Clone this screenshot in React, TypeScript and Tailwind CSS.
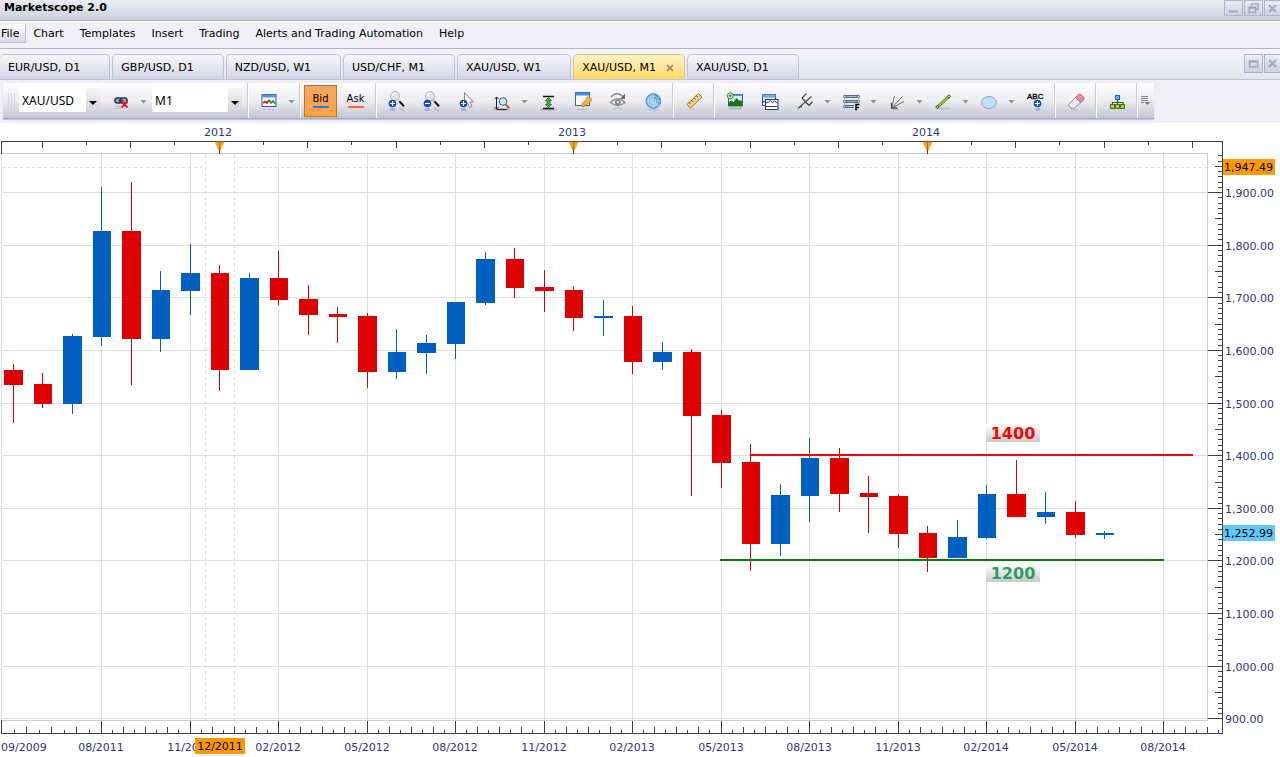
import clsx from 'clsx'
import { ReactNode } from 'react'

type TCandle = {
  high: number
  top: number
  bottom: number
  low: number
  up?: boolean
}

const menuItems = ['Chart', 'Templates', 'Insert', 'Trading', 'Alerts and Trading Automation', 'Help']

const tabs = [
  'EUR/USD, D1',
  'GBP/USD, D1',
  'NZD/USD, W1',
  'USD/CHF, M1',
  'XAU/USD, W1',
  'XAU/USD, M1',
  'XAU/USD, D1',
]
const activeTab = 5

// Monthly candles, 05/2011 - 06/2014, in chart units
const candles: TCandle[] = [
  { high: 364, top: 370, bottom: 385, low: 423 },
  { high: 373, top: 384, bottom: 404, low: 408 },
  { high: 334, top: 336, bottom: 404, low: 414, up: true },
  { high: 187, top: 231, bottom: 337, low: 346, up: true },
  { high: 182, top: 231, bottom: 339, low: 385 },
  { high: 271, top: 290, bottom: 339, low: 352, up: true },
  { high: 244, top: 273, bottom: 291, low: 315, up: true },
  { high: 265, top: 273, bottom: 370, low: 391 },
  { high: 273, top: 278, bottom: 370, low: 370, up: true },
  { high: 251, top: 278, bottom: 300, low: 305 },
  { high: 285, top: 299, bottom: 315, low: 335 },
  { high: 307, top: 314, bottom: 317, low: 343 },
  { high: 313, top: 316, bottom: 372, low: 388 },
  { high: 329, top: 352, bottom: 372, low: 379, up: true },
  { high: 335, top: 343, bottom: 353, low: 374, up: true },
  { high: 302, top: 302, bottom: 344, low: 359, up: true },
  { high: 252, top: 259, bottom: 303, low: 305, up: true },
  { high: 248, top: 259, bottom: 288, low: 298 },
  { high: 270, top: 287, bottom: 291, low: 312 },
  { high: 286, top: 290, bottom: 318, low: 331 },
  { high: 300, top: 316, bottom: 318, low: 336, up: true },
  { high: 306, top: 316, bottom: 362, low: 374 },
  { high: 342, top: 352, bottom: 362, low: 370, up: true },
  { high: 349, top: 352, bottom: 416, low: 496 },
  { high: 410, top: 415, bottom: 463, low: 488 },
  { high: 444, top: 462, bottom: 544, low: 571 },
  { high: 484, top: 495, bottom: 544, low: 556, up: true },
  { high: 438, top: 458, bottom: 496, low: 522, up: true },
  { high: 448, top: 458, bottom: 494, low: 512 },
  { high: 476, top: 493, bottom: 497, low: 533 },
  { high: 494, top: 496, bottom: 534, low: 548 },
  { high: 526, top: 533, bottom: 558, low: 572 },
  { high: 520, top: 537, bottom: 558, low: 558, up: true },
  { high: 485, top: 494, bottom: 538, low: 539, up: true },
  { high: 460, top: 494, bottom: 517, low: 517 },
  { high: 492, top: 512, bottom: 517, low: 524, up: true },
  { high: 501, top: 512, bottom: 535, low: 538 },
  { high: 531, top: 533, bottom: 535, low: 539, up: true },
]

const months = [
  '08/2011', '11/2011', '02/2012', '05/2012', '08/2012', '11/2012', '02/2013',
  '05/2013', '08/2013', '11/2013', '02/2014', '05/2014', '08/2014',
]
const prices = [
  '1,900.00', '1,800.00', '1,700.00', '1,600.00', '1,500.00', '1,400.00',
  '1,300.00', '1,200.00', '1,100.00', '1,000.00', '900.00',
]

const monthX = (i: number) => Math.round(101 + 88.5 * i)
const candleX = (i: number) => Math.round(12.9 + 29.5 * i)
const priceY = (i: number) => Math.round(192.1 + 52.62 * i)
const range = (n: number) => Array.from({ length: n }, (_, i) => i)

function Chart() {
  return (
    <svg
      viewBox="0 123 1280 634"
      className="block w-full bg-white font-['DejaVu_Sans',sans-serif] text-[11px]"
      role="img"
      aria-label="XAU/USD monthly chart"
    >
      <defs>
        <linearGradient id="plate" x1="0" y1="0" x2="0" y2="1">
          <stop offset="0" stopColor="#ffffff" />
          <stop offset="1" stopColor="#c9c9c9" />
        </linearGradient>
      </defs>

      {/* grid */}
      <g fill="#dfdfdf" shapeRendering="crispEdges">
        <rect x="1" y="154" width="1" height="566" />
        {months.map((m, i) => (
          <rect key={m} x={monthX(i)} y="154" width="1" height="566" />
        ))}
        {prices.map((p, i) => (
          <rect key={p} x="2" y={priceY(i)} width="1205" height="1" />
        ))}
      </g>
      <g stroke="#dcdcdc" strokeDasharray="3 3" shapeRendering="crispEdges">
        <path d="M205.5 155V720M234.5 155V720M2 167.5H202M239 167.5H1207" />
      </g>
      <g fill="#c3cddd" shapeRendering="crispEdges">
        <rect x="1" y="153" width="1207" height="1" />
        <rect x="1" y="720" width="1207" height="1" />
        <rect x="1207" y="153" width="1" height="568" />
      </g>

      {/* axes */}
      <g fill="#404040" shapeRendering="crispEdges">
        <rect x="1" y="141" width="1222" height="1" />
        <rect x="1" y="141" width="1" height="13" />
        <rect x="1222" y="141" width="1" height="593" />
        <rect x="1" y="733" width="1222" height="1" />
        <rect x="1" y="720" width="1" height="13" />
        {range(27).map((k) => (
          <rect key={k} x={Math.floor(42.2 + 44.25 * k)} y="142" width="1" height={k % 2 ? 3 : 6} />
        ))}
        {range(7).map((k) => (
          <rect
            key={k}
            x={Math.round(13.5 + 12.5 * k)}
            y={k % 2 ? 727 : 730}
            width="1"
            height={k % 2 ? 6 : 3}
          />
        ))}
        {range(102).map((k) => {
          const size = k % 8 === 0 ? 12 : k % 2 === 0 ? 6 : 3
          return <rect key={k} x={Math.round(101 + 11.0625 * k)} y={733 - size} width="1" height={size} />
        })}
        {range(108).map((k) => {
          const step = k - 7
          const size = step % 10 === 0 ? 14 : step % 5 === 0 ? 7 : 4
          return (
            <rect key={k} x={1222 - size} y={Math.round(192.1 + 5.262 * step)} width={size} height="1" />
          )
        })}
      </g>

      {[219, 573, 927].map((x, i) => (
        <g key={x}>
          <path d={`M${x - 4} 142h9l-4 9h-1z`} fill="#ffa21c" stroke="#f09a18" strokeWidth=".5" />
          <path d={`M${x + 0.5} 142v8`} stroke="#b46c0c" />
          <path d={`M${x + 0.5} 150v4`} stroke="#404040" />
          <text x={x - 1} y="136" textAnchor="middle" fill="#2e3a78">
            {2012 + i}
          </text>
        </g>
      ))}

      <g fill="#33337c">
        <text x="1" y="751">09/2009</text>
        {months.map((m, i) => (
          <text key={m} x={monthX(i)} y="751" textAnchor="middle">
            {m}
          </text>
        ))}
        {prices.map((p, i) => (
          <text key={p} x="1225" y={priceY(i) + 5}>
            {p}
          </text>
        ))}
      </g>

      {candles.map((c, i) => {
        const x = candleX(i)
        return (
          <g key={i} fill={c.up ? '#0060c0' : '#dc0000'} shapeRendering="crispEdges">
            <rect x={x} y={c.high} width="1" height={c.low - c.high} />
            <rect x={i % 2 ? x - 8 : x - 9} y={c.top} width={i % 2 ? 18 : 19} height={c.bottom - c.top} />
          </g>
        )
      })}

      {/* support and resistance */}
      <path d="M751 455H1193" stroke="#ff0000" strokeWidth="2" />
      <path d="M720 560H1164" stroke="#008000" strokeWidth="2" />
      <g className="text-[16px] font-bold" textAnchor="middle">
        <rect x="986" y="424" width="54" height="18" fill="url(#plate)" />
        <text x="1013" y="439" fill="#ff0000">1400</text>
        <rect x="986" y="564" width="54" height="18" fill="url(#plate)" />
        <text x="1013" y="579" fill="#2e9c66">1200</text>
      </g>

      {/* cursor and last price */}
      <rect x="195" y="738" width="50" height="16" fill="#ff9900" />
      <text x="220" y="750" textAnchor="middle">12/2011</text>
      <rect x="1223" y="159" width="52" height="16" fill="#ff9900" />
      <text x="1224" y="171">1,947.49</text>
      <rect x="1223" y="525" width="52" height="16" fill="#5fc8fa" />
      <text x="1224" y="537">1,252.99</text>
    </svg>
  )
}

function Icon({ children }: Readonly<{ children: ReactNode }>) {
  return (
    <svg width="22" height="22" viewBox="0 0 22 22" fill="none" className="shrink-0">
      {children}
    </svg>
  )
}

function Badge({ x, y, minus }: Readonly<{ x: number; y: number; minus?: boolean }>) {
  return (
    <>
      <ellipse cx={x} cy={y + 6} rx="3" ry="1.5" fill="#7f97cf" opacity=".6" />
      <circle cx={x} cy={y} r="3.8" fill="#1749a8" />
      <path d={`M${x - 2.5} ${y}h5${minus ? '' : `M${x} ${y - 2.5}v5`}`} stroke="#fff" strokeWidth="1.2" />
    </>
  )
}

function Lens({ minus }: Readonly<{ minus?: boolean }>) {
  return (
    <Icon>
      <path d="M13 17l5 3" stroke="#a9a9b4" strokeWidth="2" opacity=".6" />
      <circle cx="9" cy="5.2" r="4.6" fill="#e0e0e5" stroke="#b2b2b8" />
      <path d="M6 4.5a3.4 3.4 0 0 1 5-1.8" stroke="#fff" strokeWidth="1.5" />
      <path d="M12 9l2 2" stroke="#999" strokeWidth="1.5" />
      <path d="M13.5 10.5l4.5 4.8" stroke="#111" strokeWidth="2" />
      <Badge x={6.5} y={12.5} minus={minus} />
    </Icon>
  )
}

const icons = {
  link: (
    <Icon>
      <g stroke="#263a55" strokeWidth="1.6">
        <rect x="5" y="7" width="7" height="5" rx="2.5" fill="#9fb3cc" />
        <rect x="10" y="7" width="7" height="5" rx="2.5" fill="#9fb3cc" />
        <path d="M8.5 9.5h5" />
      </g>
      <path d="M5 15.5h8M6 17.5h5" stroke="#b8bcc8" />
      <path d="M11.5 10.5l6 6M17.5 10.5l-6 6" stroke="#e8131b" strokeWidth="1.8" />
    </Icon>
  ),
  chart: (
    <Icon>
      <rect x="4" y="3.5" width="14" height="12" fill="#fff" stroke="#2c5a9e" />
      <rect x="4" y="3.5" width="14" height="3" fill="#5b92e0" />
      <path d="M5 12l2-1.5 2 1.5 2-3" stroke="#d81818" strokeWidth="1.6" />
      <path d="M11 9l2 3 2-2 2.5 3" stroke="#1f8a2c" strokeWidth="1.6" />
      <path d="M5 18.5h2M10 18.5h2M14 18.5h2" stroke="#cfa9b6" />
    </Icon>
  ),
  pointer: (
    <Icon>
      <path d="M8.5 1.5v13l3-2.5 2 4.5 2.5-1-2-4.5h3.5z" fill="#f2f2f5" stroke="#85858f" />
      <Badge x={7.5} y={12.5} />
    </Icon>
  ),
  zoomRange: (
    <Icon>
      <ellipse cx="11" cy="18.5" rx="9" ry="1.5" fill="#b9b9c4" />
      <path d="M5.5 6v12.5M3.5 8l2-2 2 2M3.5 16l2 2 2-2M6 18.5h10" stroke="#222" />
      <circle cx="12" cy="10.5" r="3.8" fill="#c4edfa" stroke="#3c5f74" />
      <path d="M14.8 13.5l3.5 3.8" stroke="#b5651d" strokeWidth="2" />
    </Icon>
  ),
  fitHeight: (
    <Icon>
      <ellipse cx="11" cy="18.5" rx="9" ry="1.5" fill="#b9b9c4" />
      <path d="M6 5.5h11M6 17.5h11" stroke="#111" strokeWidth="1.5" />
      <path
        d="M11.5 6.5l3 3h-1.500v4h1.500l-3 3-3-3h1.500v-4h-1.500z"
        fill="#4fae2e"
        stroke="#1e6410"
        strokeWidth=".8"
      />
    </Icon>
  ),
  windowKey: (
    <Icon>
      <rect x="3.5" y="1.5" width="14" height="13" fill="#f8faff" stroke="#315fa8" />
      <rect x="3.5" y="1.5" width="14" height="3" fill="#4c86e0" />
      <path
        d="M18.5 6.5c-2-1.5-5 0-4.5 3l-4 3v3l2 .5 1-2 2-.5 2-2c2 0 3.5-3 1.5-5z"
        fill="#f7b42e"
        stroke="#bb7610"
        strokeWidth=".8"
      />
      <path d="M5 18.5h6" stroke="#a8b4d0" />
      <path d="M11 18.5h5" stroke="#e4c48a" />
    </Icon>
  ),
  eye: (
    <Icon>
      <path d="M4 6q5-6 11.500-1" stroke="#85858d" strokeWidth="1.3" />
      <path d="M18 2.5v5.5h-5z" fill="#66666e" />
      <path d="M3.500 11.500q7-7 14.500 0q-7 6-14.500 0z" fill="#f0f0f2" stroke="#8c8c94" strokeWidth="1.3" />
      <circle cx="10.8" cy="11.3" r="3" fill="#85858d" />
      <circle cx="10.8" cy="11" r="1.2" fill="#ddd" />
      <path d="M6 18q5-3 9 0" stroke="#bcbcc4" />
    </Icon>
  ),
  radar: (
    <Icon>
      <ellipse cx="11.5" cy="19" rx="6" ry="1.5" fill="#b9cfe4" />
      <circle cx="11.3" cy="10" r="7.3" fill="#7fc0e8" stroke="#3f83bb" />
      <path d="M11.3 10l6.5 3.500a7.300 7.300 0 0 0-6.500-10.800z" fill="#4d9bd2" />
      <circle cx="11.3" cy="10" r="5" stroke="#cfeaf9" strokeWidth=".8" />
      <circle cx="11.3" cy="10" r="2.5" stroke="#cfeaf9" strokeWidth=".8" />
      <path d="M4.500 10h14M11.300 3v14M11.300 10l5 5" stroke="#cfeaf9" strokeWidth=".6" />
    </Icon>
  ),
  ruler: (
    <Icon>
      <path d="M6 19l5-1" stroke="#d8c6a6" strokeWidth="2" />
      <path d="M4 13.5L15.5 2.5l3.5 3.5L7.5 17z" fill="#f3d286" stroke="#a5772a" />
      <path d="M6 11.5l1.5 1.5M8.500 9.300l1.500 1.500M10.800 7l1.500 1.500M13.200 4.700l1.500 1.500" stroke="#6d4c17" />
    </Icon>
  ),
  picture: (
    <Icon>
      <rect x="4.5" y="3.5" width="14" height="11.5" fill="#d3e8fb" stroke="#2f66b4" />
      <path d="M4.5 4h14" stroke="#3c7ad0" strokeWidth="1.5" />
      <path d="M4.5 15v-3.500l3-2 2 1.500 3-4 3 3 1.500-1 1.500 2v4z" fill="#1c7410" />
      <path d="M5 17.5h13" stroke="#a7c4a4" strokeWidth="2" />
      <circle cx="6.2" cy="4.8" r="3" fill="#dff2c4" stroke="#4d8a1c" />
      <path d="M4.500 4.800h3.500M6.200 3v3.500" stroke="#4d8a1c" />
    </Icon>
  ),
  windows: (
    <Icon>
      <rect x="3.5" y="3.5" width="13" height="11" fill="#dbe8fb" stroke="#2f5796" />
      <rect x="3.5" y="3.5" width="13" height="3" fill="#6ea2ea" />
      <path d="M4 10.5h12" stroke="#243c66" />
      <rect x="6.5" y="8.5" width="12.5" height="10" fill="#fff" stroke="#243c66" />
      <path d="M6.5 12l3-1 2-1.5 2 2 2-1.5 3 2" stroke="#333" />
      <path d="M7 15.5h12" stroke="#243c66" />
    </Icon>
  ),
  pitchfork: (
    <Icon>
      <path
        d="M4 17.500L17.500 5.500M8 7l7 7.500M8 7l4.500-4.500M15 14.500l3.500-4M5 16h3"
        stroke="#45454c"
        strokeWidth="1.2"
      />
    </Icon>
  ),
  fib: (
    <Icon>
      {[5.5, 10.5, 15.5].map((y) => (
        <g key={y}>
          <rect x="4" y={y - 1.5} width="15" height="3" fill="#4f6a78" />
          <path d={`M6 ${y}h11`} stroke="#a9bbc5" />
          <circle cx="4.7" cy={y} r="1.3" fill="#dde6ea" stroke="#3d5360" strokeWidth=".8" />
          <circle cx="18.3" cy={y} r="1.3" fill="#dde6ea" stroke="#3d5360" strokeWidth=".8" />
        </g>
      ))}
      <rect x="14" y="12.5" width="6" height="8" fill="#dcdce6" />
      <path d="M16 19.5v-6h3.500M16 16.500h3" stroke="#000" strokeWidth="1.5" />
    </Icon>
  ),
  fan: (
    <Icon>
      <path d="M5.500 17L8.500 5M5.500 17L16.500 5.500M5.500 17L18 10.500" stroke="#6a6a70" />
      <path d="M5.500 12v5h6" stroke="#4a4a50" strokeWidth="1.3" />
      <path d="M6 18.500h7" stroke="#b9b9c4" />
    </Icon>
  ),
  line: (
    <Icon>
      <ellipse cx="12" cy="17.5" rx="7" ry="1" fill="#bdbdc8" />
      <path d="M5.5 16L17 5.5" stroke="#54800a" strokeWidth="3" />
      <path d="M5.5 16L17 5.5" stroke="#9fd02c" strokeWidth="1.4" />
      <circle cx="5.3" cy="16" r="1.3" fill="#eee" stroke="#42580f" />
      <circle cx="17" cy="5.5" r="1.3" fill="#eee" stroke="#42580f" />
    </Icon>
  ),
  ellipse: (
    <Icon>
      <ellipse cx="11" cy="11.5" rx="7.5" ry="6" fill="#c5def4" stroke="#7fa6cf" />
    </Icon>
  ),
  abc: (
    <Icon>
      <text
        x="3"
        y="8"
        fontSize="8"
        fontFamily="Liberation Sans, sans-serif"
        fill="#000"
        stroke="#000"
        strokeWidth=".3"
      >
        ABC
      </text>
      <Badge x={13.5} y={12.5} />
    </Icon>
  ),
  eraser: (
    <Icon>
      <path d="M6 19h7" stroke="#c9c4ce" strokeWidth="2" />
      <path d="M4 13l6.500-6.500 5.500 5-6.500 5.500q-2 1-3.500 0l-2-2q-1-1 0-2z" fill="#ececee" stroke="#8e8e96" />
      <path d="M10.500 6.500l3-2.800q1.500-1 3 .3l2 2q1 1.500 0 2.800L16 11.500z" fill="#ec8d9c" stroke="#c05c70" />
    </Icon>
  ),
  tree: (
    <Icon>
      <path d="M11.5 9v5M6.500 14v-2.500h10.500V14" stroke="#3c5a10" strokeWidth="1.2" />
      <rect x="9.5" y="4.5" width="4" height="4" fill="#58b4f4" stroke="#1d62b8" />
      {[4.5, 9.5, 14.5].map((x) => (
        <rect key={x} x={x} y="13.5" width="4" height="4" fill="#a5cc3a" stroke="#4f740c" />
      ))}
    </Icon>
  ),
}

function Tool({ name, children }: Readonly<{ name: string; children: ReactNode }>) {
  return (
    <button aria-label={name} className="flex h-full w-[35px] shrink-0 items-center justify-center pt-[3px]">
      {children}
    </button>
  )
}

function Caret() {
  return (
    <button aria-label="More" className="flex h-full w-[11px] shrink-0 items-center justify-center pt-0.5">
      <svg width="7" height="4" viewBox="0 0 7 4">
        <path d="M0.5 0h6L3.5 3.5z" fill="#9090a2" />
      </svg>
    </button>
  )
}

function Separator() {
  return (
    <div className="flex h-full w-1.5 shrink-0 justify-center">
      <div className="w-px bg-[#c9c9d6]" />
      <div className="w-px bg-white" />
    </div>
  )
}

function Combo({ label, value, className }: Readonly<{ label: string; value: string; className?: string }>) {
  return (
    <div className={clsx('relative mt-[3px] h-[26px] shrink-0 self-start', className)}>
      <select
        aria-label={label}
        className="h-full w-full appearance-none bg-white pt-1 pl-[3px] font-['Noto_Sans',sans-serif] text-[12px] text-black"
      >
        <option>{value}</option>
      </select>
      <span className="pointer-events-none absolute right-0 bottom-0 flex h-6 w-[14px] items-center justify-center bg-linear-to-b from-[#f4f4f8] to-[#d2d2de] pt-1.5">
        <svg width="8" height="4" viewBox="0 0 8 4">
          <path d="M0 0h8L4 4z" fill="#000" />
        </svg>
      </span>
    </div>
  )
}

function PriceButton({ text, active }: Readonly<{ text: string; active?: boolean }>) {
  return (
    <button
      className={clsx(
        'mx-px flex h-8 w-[33px] shrink-0 flex-col items-center justify-center gap-px border text-[10px] leading-3',
        active ? 'border-[#a87a34] bg-linear-to-b from-[#f5a860] to-[#ffa040]' : 'border-transparent'
      )}
    >
      {text}
      <span className={clsx('h-0.5 w-4', active ? 'bg-[#1584f0]' : 'bg-[#ff6038]')} />
    </button>
  )
}

function WindowButton({ name, cut, children }: Readonly<{ name: string; cut?: boolean; children: ReactNode }>) {
  return (
    <button
      aria-label={name}
      className={clsx(
        'flex items-center justify-center border border-[#b0b3cb] bg-linear-to-b from-[#ececf4] to-[#cfd1e0]',
        cut ? 'w-4 border-r-0' : 'w-[19px]'
      )}
    >
      <svg width="11" height="11" viewBox="0 0 11 11" fill="none" stroke="#a2a6c4" strokeWidth="1.5">
        {children}
      </svg>
    </button>
  )
}

function TitleBar() {
  return (
    <div className="flex h-[21px] justify-between border-b border-[#a4aecb] bg-linear-to-b from-[#ebecf2] to-[#cdd1dc]">
      <h1 className="pl-1 leading-4 font-bold">Marketscope 2.0</h1>
      <div className="flex h-4 gap-px">
        <WindowButton name="Minimize">
          <path d="M1 8.5h9" strokeWidth="2" />
        </WindowButton>
        <WindowButton name="Restore">
          <path d="M3.5 3V1h6.500v5.500H8M1 4h6.500v5.500H1zM1 5h6" />
        </WindowButton>
        <WindowButton name="Close" cut>
          <path d="M2 2l7 7M9 2l-7 7" strokeWidth="2" />
        </WindowButton>
      </div>
    </div>
  )
}

function MenuBar() {
  return (
    <nav className="flex h-[27px] items-start border-b border-[#b3b3cb] pt-0.5 leading-5">
      <button className="h-[19px] border-r border-b border-[#b9bad2] bg-linear-to-b from-white to-[#d8d9e6] pr-1.5 pl-px">
        File
      </button>
      {menuItems.map((item) => (
        <button key={item} className="pr-[9px] pl-[7px]">
          {item}
        </button>
      ))}
    </nav>
  )
}

function TabBar() {
  return (
    <div className="flex h-[31px] items-end justify-between border-b border-[#c0c0d6] bg-linear-to-b from-[#f3f3f9] to-[#e4e4f0]">
      <div className="flex gap-0.5" role="tablist">
        {tabs.map((tab, i) => (
          <button
            key={tab}
            role="tab"
            aria-selected={i === activeTab}
            className={clsx(
              'flex h-[25px] items-center rounded-t-[5px] border border-b-0 pt-0.5 pl-2',
              i === activeTab
                ? 'gap-2.5 border-[#d8c48c] bg-linear-to-b from-[#fff3c4] to-[#ffd95e] pr-2.5'
                : 'border-[#bfc0d6] bg-linear-to-b from-[#f6f6fb] to-[#d5d6e4] pr-[29px]',
              i === 0 && 'border-l-0'
            )}
          >
            {tab}
            {i === activeTab && (
              <svg width="8" height="8" viewBox="0 0 8 8" stroke="#8c815c" strokeWidth="1.5">
                <path d="M1 1l6 6M7 1l-6 6" />
              </svg>
            )}
          </button>
        ))}
      </div>
      <div className="mb-1.5 flex h-[19px] gap-px">
        <WindowButton name="Restore chart">
          <path d="M1.5 3h8v6h-8zM1.5 4h8" />
        </WindowButton>
        <WindowButton name="Close chart" cut>
          <path d="M2 2l7 7M9 2l-7 7" strokeWidth="2" />
        </WindowButton>
      </div>
    </div>
  )
}

function Toolbar() {
  return (
    <div className="flex h-[43px] pt-[3px] pl-[3px]">
      <div className="flex h-9 items-center border-b border-[#a3a3b8] bg-linear-to-b from-[#fdfdfe] via-[#ececf1] to-[#c6c6d6] shadow-[0_1px_1px_#c8c8d6]">
        <div className="flex w-4 shrink-0 justify-center gap-0.5">
          <div className="h-4 w-px bg-[#d6d6e0]" />
          <div className="h-4 w-px bg-[#d6d6e0]" />
          <div className="h-4 w-px bg-[#d6d6e0]" />
        </div>
        <Combo label="Instrument" value="XAU/USD" className="mr-[3px] w-[81px]" />
        <Tool name="Unlink">{icons.link}</Tool>
        <Caret />
        <Combo label="Period" value="M1" className="mx-[3px] w-[90px]" />
        <Separator />
        <Tool name="Chart type">{icons.chart}</Tool>
        <Caret />
        <Separator />
        <PriceButton text="Bid" active />
        <PriceButton text="Ask" />
        <Separator />
        <Tool name="Zoom in">
          <Lens />
        </Tool>
        <Tool name="Zoom out">
          <Lens minus />
        </Tool>
        <Tool name="Pointer">{icons.pointer}</Tool>
        <Tool name="Zoom range">{icons.zoomRange}</Tool>
        <Caret />
        <Tool name="Fit height">{icons.fitHeight}</Tool>
        <Tool name="Chart options">{icons.windowKey}</Tool>
        <Tool name="Show or hide">{icons.eye}</Tool>
        <Tool name="Radar">{icons.radar}</Tool>
        <Separator />
        <Tool name="Ruler">{icons.ruler}</Tool>
        <Separator />
        <Tool name="Add picture">{icons.picture}</Tool>
        <Tool name="Add indicator">{icons.windows}</Tool>
        <Tool name="Pitchfork">{icons.pitchfork}</Tool>
        <Caret />
        <Tool name="Fibonacci">{icons.fib}</Tool>
        <Caret />
        <Tool name="Fan">{icons.fan}</Tool>
        <Caret />
        <Tool name="Line">{icons.line}</Tool>
        <Caret />
        <Tool name="Ellipse">{icons.ellipse}</Tool>
        <Caret />
        <Tool name="Label">{icons.abc}</Tool>
        <Separator />
        <Tool name="Eraser">{icons.eraser}</Tool>
        <Separator />
        <Tool name="Objects">{icons.tree}</Tool>
        <Separator />
        <button aria-label="Toolbar options" className="flex h-full w-[14px] shrink-0 items-center">
          <svg width="11" height="11" viewBox="0 0 11 11">
            <path d="M1 1.5h7M1 3.5h7M1 5.5h7M1 7.5h3" stroke="#85859a" />
            <path d="M4.5 7h6l-3 3z" fill="#77778c" />
          </svg>
        </button>
      </div>
    </div>
  )
}

export default function App() {
  return (
    <main className="min-h-screen overflow-hidden bg-white font-['DejaVu_Sans',sans-serif] text-[11px] text-black">
      <header className="bg-[#efeff5] whitespace-nowrap">
        <TitleBar />
        <div className="border-t border-white">
          <MenuBar />
        </div>
        <TabBar />
        <Toolbar />
      </header>
      <Chart />
    </main>
  )
}
